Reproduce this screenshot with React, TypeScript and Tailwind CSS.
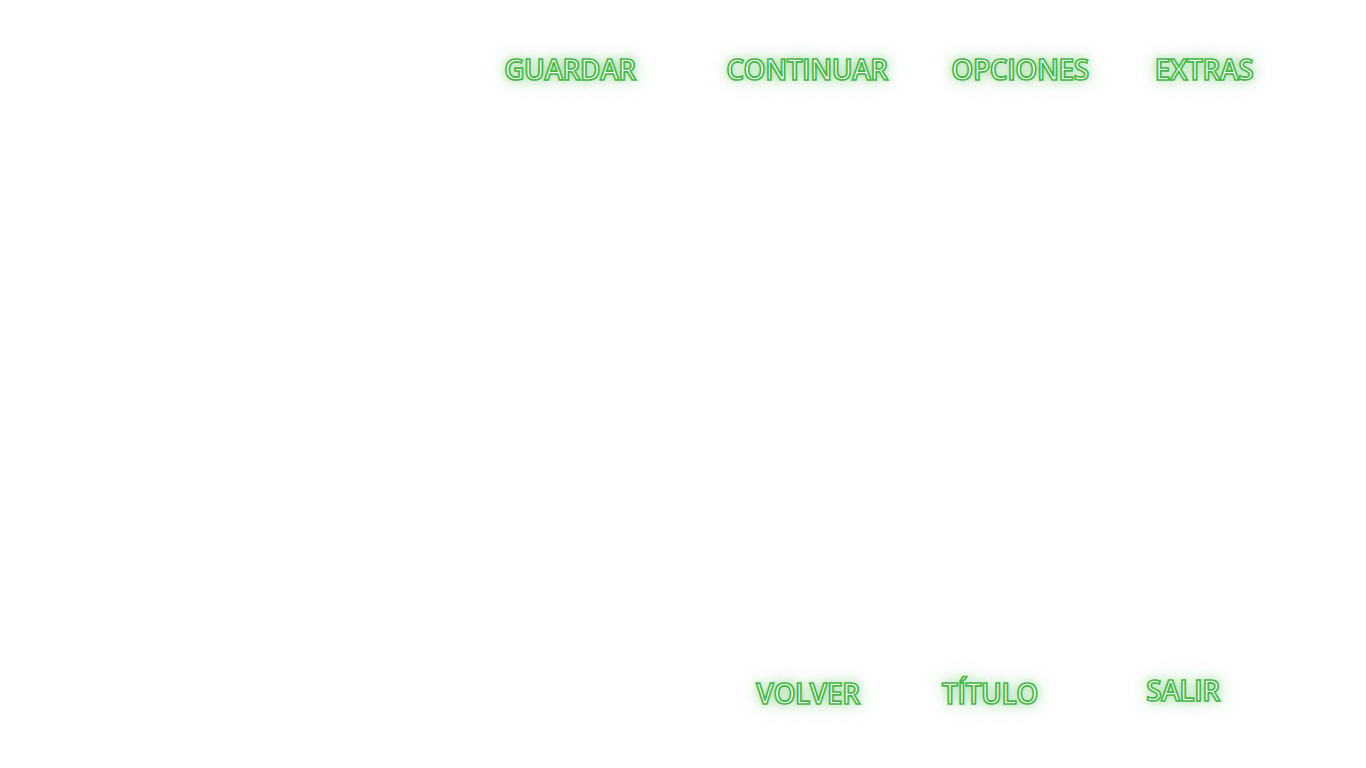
import React from "react";

const glow =
  "text-white font-semibold text-[28px] leading-none tracking-[-0.4px] [font-family:'Open_Sans',sans-serif] [-webkit-text-stroke:1.7px_#44b944] [text-shadow:0_0_18px_rgba(60,180,60,0.55),0_0_8px_rgba(60,180,60,0.4)] cursor-pointer select-none";

export default function App() {
  return (
    <div className="w-[1366px] h-[768px] bg-white flex flex-col justify-between overflow-hidden">
      <nav className="flex pt-[55px] pl-[470px]">
        <div className="w-[200px] flex justify-center">
          <span className={glow}>GUARDAR</span>
        </div>
        <div className="w-[274px] flex justify-center">
          <span className={glow}>CONTINUAR</span>
        </div>
        <div className="w-[152px] flex justify-center">
          <span className={glow}>OPCIONES</span>
        </div>
        <div className="w-[216px] flex justify-center">
          <span className={glow}>EXTRAS</span>
        </div>
      </nav>
      <nav className="flex items-start pb-[61px] pl-[720px]">
        <div className="w-[176px] flex justify-center pt-[3px]">
          <span className={glow}>VOLVER</span>
        </div>
        <div className="w-[188px] flex justify-center pt-[3px]">
          <span className={glow}>TÍTULO</span>
        </div>
        <div className="w-[198px] flex justify-center">
          <span className={glow}>SALIR</span>
        </div>
      </nav>
    </div>
  );
}
